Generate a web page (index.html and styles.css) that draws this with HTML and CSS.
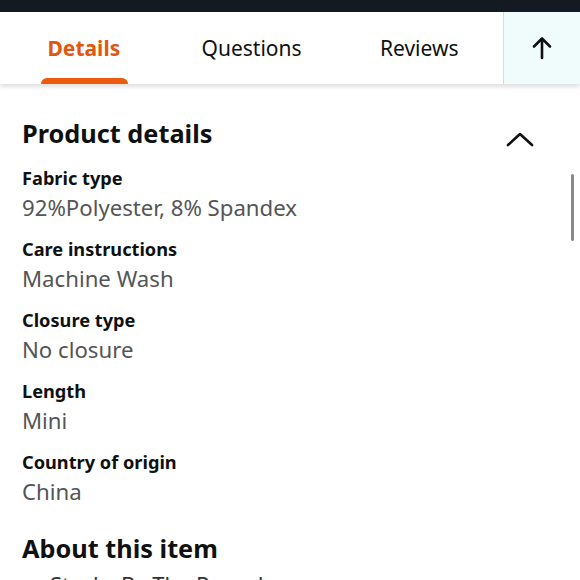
FILE: index.html
```html
<!DOCTYPE html>
<html>
<head>
<meta charset="utf-8">
<link rel="stylesheet" href="styles.css">
</head>
<body>
<div class="topbar"></div>
<div class="tabs">
  <div class="tab active">Details<span class="underline"></span></div>
  <div class="tab">Questions</div>
  <div class="tab">Reviews</div>
  <div class="up">
    <svg width="20" height="24" viewBox="0 0 20 24"><path d="M10 22V3M2 10.5L10 2.5L18 10.5" fill="none" stroke="#0f1111" stroke-width="2.6" stroke-linecap="round" stroke-linejoin="round"/></svg>
  </div>
</div>
<div class="content">
  <div class="head">
    <h2>Product details</h2>
    <svg class="chev" width="28" height="16" viewBox="0 0 28 16"><path d="M2 14L14 3L26 14" fill="none" stroke="#0f1111" stroke-width="2.6" stroke-linecap="round" stroke-linejoin="round"/></svg>
  </div>
  <div class="row"><div class="label">Fabric type</div><div class="value">92%Polyester, 8% Spandex</div></div>
  <div class="row"><div class="label">Care instructions</div><div class="value">Machine Wash</div></div>
  <div class="row"><div class="label">Closure type</div><div class="value">No closure</div></div>
  <div class="row"><div class="label">Length</div><div class="value">Mini</div></div>
  <div class="row"><div class="label">Country of origin</div><div class="value">China</div></div>
  <h2 class="about">About this item</h2>
  <div class="bullet">Stacks By The Pound</div>
  <div class="scroll"></div>
</div>
</body>
</html>
```
FILE: styles.css
```css
* { box-sizing: border-box; }
html, body { margin: 0; padding: 0; background: #fff; }
body { width: 580px; height: 580px; overflow: hidden; font-family: "Noto Sans", "Open Sans", sans-serif; color: #0f1111; position: relative; }
.topbar { height: 12px; background: #131a22; }
.tabs { height: 72px; display: flex; background: #fff; box-shadow: 0 3px 4px rgba(0,0,0,0.12); position: relative; z-index: 2; }
.tab { width: 167.7px; display: flex; align-items: center; justify-content: center; font-size: 21px; color: #0f1111; position: relative; padding-bottom: 1px; }
.tab.active { color: #e3560f; font-weight: 700; }
.underline { position: absolute; left: 41px; width: 87px; bottom: 0; height: 6px; background: #ee5a0c; border-radius: 6px 6px 0 0; }
.up { flex: 1; background: #effcfb; border-left: 1px solid #dcdcdc; display: flex; align-items: center; justify-content: center; }
.content { padding: 27px 0 0 22px; position: relative; }
.head { display: flex; justify-content: space-between; align-items: center; padding-right: 46px; }
h2 { margin: 0; font-size: 25.3px; font-weight: 700; line-height: 44px; }
.chev { margin-top: 12px; }
.row { margin-top: 10px; }
.row + .row { margin-top: 13px; }
.label { font-size: 18.2px; font-weight: 700; line-height: 27px; }
.value { font-size: 22.2px; color: #555; line-height: 31px; }
.about { margin-top: 21px; line-height: 40px; }
.bullet { padding-left: 28px; font-size: 22px; color: #333; line-height: 30px; padding-top: 1px; }
.scroll { position: absolute; right: 6px; top: 90px; width: 3px; height: 67px; background: #8a8a8a; border-radius: 2px; }
```
